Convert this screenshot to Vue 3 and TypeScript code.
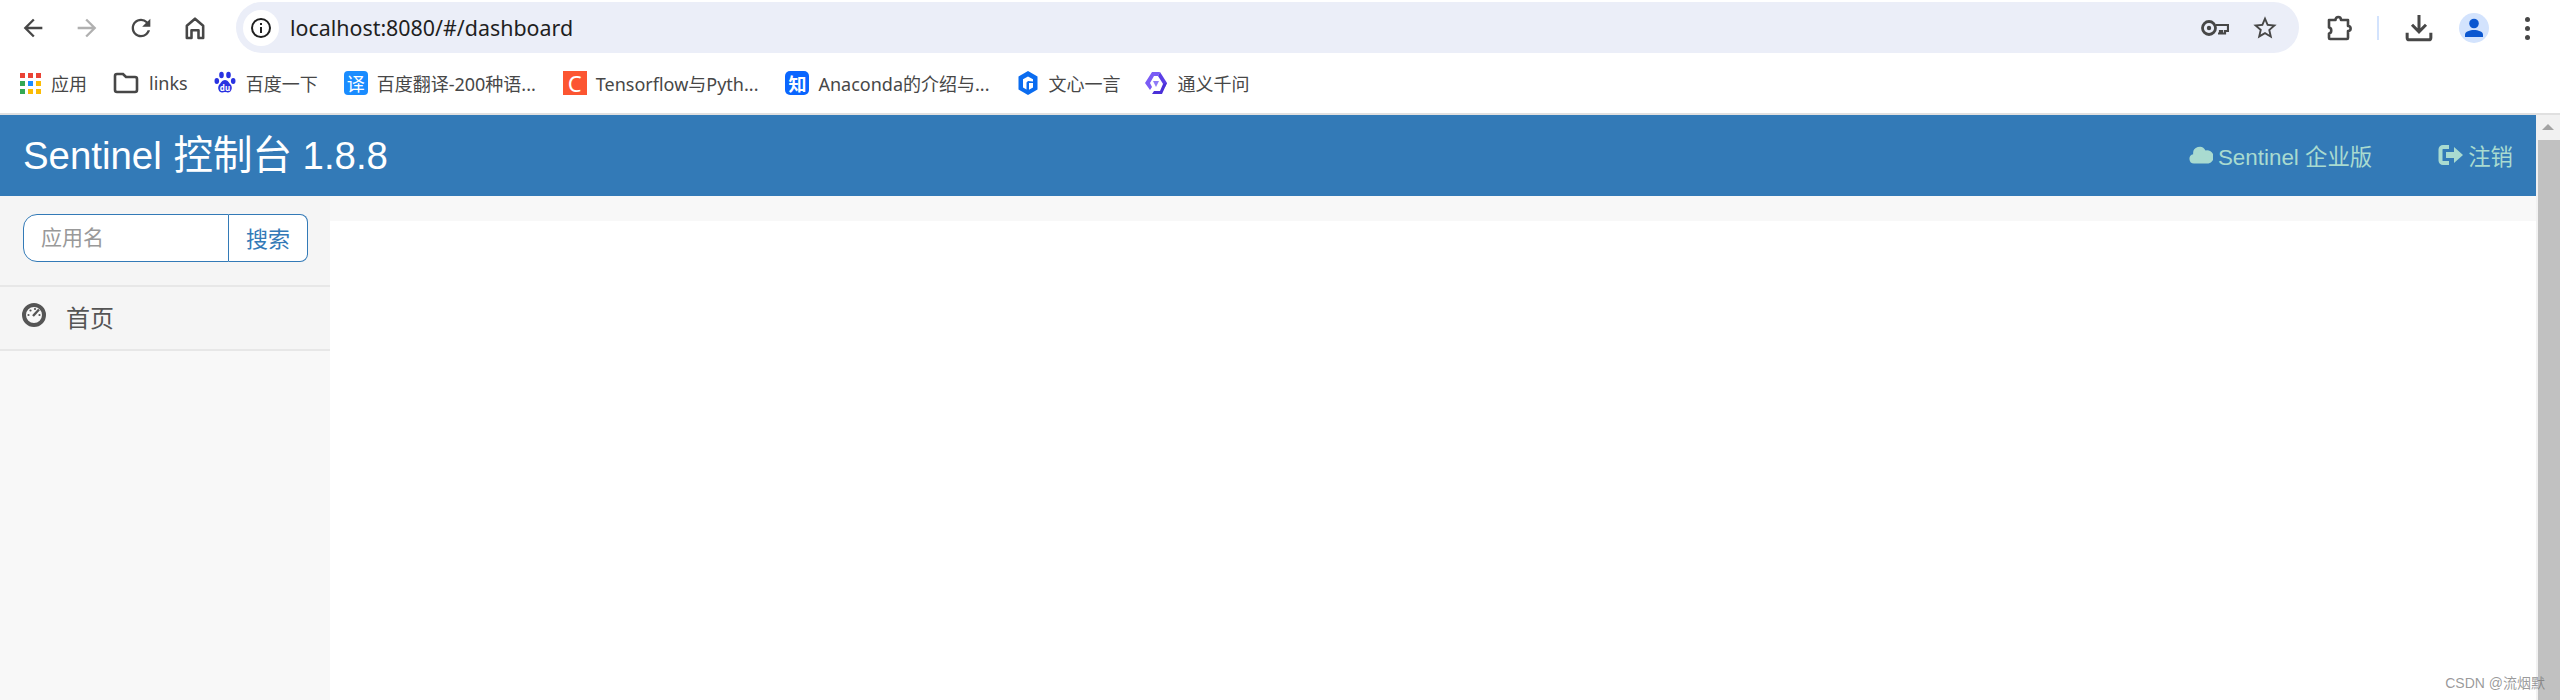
<script setup lang="ts">
const appColors: string[] = [
  "#ea4335", "#ea4335", "#ea4335",
  "#34a853", "#1a8cff", "#fbbc04",
  "#34a853", "#fbbc04", "#fbbc04",
];
</script>

<template>
  <div class="window">
    <header class="toolbar">
      <div class="nav-btns">
        <svg class="ic" viewBox="0 0 24 24"><path d="M20 11H7.83l5.59-5.59L12 4l-8 8 8 8 1.41-1.41L7.83 13H20v-2z" /></svg>
        <svg class="ic off" viewBox="0 0 24 24"><path d="M4 11h12.17l-5.59-5.59L12 4l8 8-8 8-1.41-1.41L16.17 13H4v-2z" /></svg>
        <svg class="ic" viewBox="0 0 24 24"><path d="M17.65 6.35A7.958 7.958 0 0 0 12 4c-4.42 0-7.99 3.58-7.99 8s3.57 8 7.99 8c3.73 0 6.84-2.55 7.73-6h-2.08A5.99 5.99 0 0 1 12 18c-3.31 0-6-2.69-6-6s2.69-6 6-6c1.66 0 3.14.69 4.22 1.78L13 11h7V4l-2.35 2.35z" /></svg>
        <svg class="ic" viewBox="0 0 24 24"><path class="line" d="M5 20.5V10l7-6 7 6v10.5h-4V14H9v6.500z" /></svg>
      </div>
      <div class="omnibox">
        <span class="site-info">
          <svg width="22" height="22" viewBox="0 0 22 22">
            <circle cx="11" cy="11" r="9" fill="none" stroke="#1f1f1f" stroke-width="2" />
            <rect x="10" y="10" width="2" height="6" fill="#1f1f1f" />
            <rect x="10" y="6" width="2" height="2" fill="#1f1f1f" />
          </svg>
        </span>
        <span class="url">localhost:8080/#/dashboard</span>
        <span class="omni-right">
          <svg width="28" height="18" viewBox="0 0 28 18">
            <circle cx="8" cy="9" r="6.500" fill="none" stroke="#474747" stroke-width="2.800" />
            <circle cx="8" cy="9" r="2.200" fill="#474747" />
            <path d="M15 6h12v6h-3v2.500h-3V12h-2v2.500h-2" fill="none" stroke="#474747" stroke-width="2.200" />
          </svg>
          <svg class="ic" viewBox="0 0 24 24"><path d="M22 9.240l-7.190-.62L12 2 9.190 8.630 2 9.240l5.460 4.730L5.820 21 12 17.270 18.180 21l-1.630-7.030L22 9.240zM12 15.400l-3.760 2.270 1-4.280-3.320-2.880 4.380-.38L12 6.100l1.710 4.040 4.380.38-3.320 2.880 1 4.280L12 15.400z" /></svg>
        </span>
      </div>
      <div class="tools">
        <svg class="puzzle" width="26" height="26" viewBox="0 0 26 26">
          <path class="line bold" d="M3 5h6.500c0-4 5.500-4 5.500 0H22v6c3.500 0 3.500 5 0 5v7a1 1 0 0 1-1 1H4a1 1 0 0 1-1-1v-4.500c3-.5 3-5.500 0-6z" />
        </svg>
        <span class="sep"></span>
        <svg width="28" height="28" viewBox="0 0 26 26">
          <path d="M13 1v15M6.500 10l6.500 6.500 6.500-6.500" fill="none" stroke="#474747" stroke-width="2.800" />
          <path d="M2 17.500v4.500a2 2 0 0 0 2 2h18a2 2 0 0 0 2-2v-4.500" fill="none" stroke="#474747" stroke-width="2.800" />
        </svg>
        <span class="avatar">
          <svg width="20" height="20" viewBox="0 0 20 20">
            <circle cx="10" cy="5.500" r="4.800" fill="#0b57d0" />
            <path d="M1 19v-2.500c0-3 5-4.500 9-4.500s9 1.500 9 4.500V19z" fill="#0b57d0" />
          </svg>
        </span>
        <span class="dots"><i></i><i></i><i></i></span>
      </div>
    </header>

    <nav class="bookmarks">
      <a class="mark">
        <span class="apps"><i v-for="(c, n) in appColors" :key="n" :style="{ background: c }"></i></span>
        应用
      </a>
      <a class="mark">
        <svg width="26" height="22" viewBox="0 0 26 22"><path d="M2 4a2 2 0 0 1 2-2h6l3 3h9a2 2 0 0 1 2 2v11a2 2 0 0 1-2 2H4a2 2 0 0 1-2-2z" fill="none" stroke="#474747" stroke-width="2.600" /></svg>
        links
      </a>
      <a class="mark">
        <svg width="22" height="24" viewBox="0 0 22 24">
          <ellipse cx="7.500" cy="4" rx="2.300" ry="3.300" fill="#2932e1" />
          <ellipse cx="14.500" cy="4" rx="2.300" ry="3.300" fill="#2932e1" />
          <ellipse cx="2.800" cy="10" rx="2.300" ry="3" fill="#2932e1" />
          <ellipse cx="19.200" cy="10" rx="2.300" ry="3" fill="#2932e1" />
          <path d="M11 9c-3 0-4 3-6 5-2 3 0 8 3.500 7.500 1-.2 2-.5 2.500-.5s1.500.3 2.500.5C17 22 19 17 17 14c-2-2-3-5-6-5z" fill="#2932e1" />
          <text x="11" y="20" class="du">du</text>
        </svg>
        百度一下
      </a>
      <a class="mark">
        <span class="tile tile-blue">译</span>
        <span class="tight">百度翻译-200种语...</span>
      </a>
      <a class="mark">
        <span class="tile tile-orange">C</span>
        <span class="tight">Tensorflow与Pyth...</span>
      </a>
      <a class="mark">
        <span class="tile tile-zhi">知</span>
        <span class="tight">Anaconda的介绍与...</span>
      </a>
      <a class="mark">
        <svg width="22" height="26" viewBox="0 0 22 26">
          <path d="M11 1l9.500 5.500v13L11 25l-9.500-5.500v-13z" fill="#0a6cf0" />
          <path d="M11 6.500l5 2.800v2.200l-5-.5-1.500 1.500v7L6 17.500V9.300z" fill="#fff" />
          <path d="M12 13h4v4.500l-4 2.300z" fill="#fff" />
        </svg>
        文心一言
      </a>
      <a class="mark last">
        <svg width="24" height="24" viewBox="0 0 24 24">
          <path d="M8 1h8l-2 4h-4l-4 7 2 4-2 3-5-7z" fill="#7a5cf5" />
          <path d="M16 1l7 11-2 4-7-11z" fill="#5b3ee6" />
          <path d="M23 12l-5 11H8l2-3h6l3-7z" fill="#4a30d8" />
          <path d="M9 10h6l-3 6z" fill="#8f7bf7" />
        </svg>
        通义千问
      </a>
    </nav>

    <div class="page">
      <div class="app-col">
        <div class="navbar">
          <span class="brand">Sentinel <span class="brand-cjk">控制台</span> 1.8.8</span>
          <div class="nav-links">
            <a class="nav-link">
              <svg width="24" height="18" viewBox="0 0 24 18"><path d="M5 17.500a4.700 4.700 0 0 1-.8-9.300A6.500 6.500 0 0 1 16.500 4.500 5 5 0 0 1 19.500 17.500z" fill="#a9dbd0" /></svg>
              Sentinel 企业版
            </a>
            <a class="nav-link logout">
              <svg width="26" height="22" viewBox="0 0 26 22">
                <path d="M11 3H5a2.500 2.500 0 0 0-2.500 2.500v11A2.500 2.500 0 0 0 5 19h6" fill="none" stroke="#a9dbd0" stroke-width="4" />
                <path d="M8 8h8V3l9 8-9 8v-5H8z" fill="#a9dbd0" />
              </svg>
              注销
            </a>
          </div>
        </div>
        <div class="body-row">
          <aside class="sidebar">
            <div class="search-wrap">
              <form class="search" @submit.prevent>
                <input class="search-input" type="text" placeholder="应用名" />
                <button class="search-btn" type="button">搜索</button>
              </form>
            </div>
            <a class="menu-item">
              <svg width="24" height="24" viewBox="0 0 24 24">
                <circle cx="12" cy="12" r="10" fill="#f8f8f8" stroke="#555" stroke-width="4" />
                <circle cx="6.500" cy="12" r="1.100" fill="#555" />
                <circle cx="8.500" cy="7.500" r="1.100" fill="#555" />
                <circle cx="13" cy="6" r="1.100" fill="#555" />
                <circle cx="17.500" cy="12" r="1.100" fill="#555" />
                <path d="M17 6.500L11 13" stroke="#555" stroke-width="2.400" />
              </svg>
              <span>首页</span>
            </a>
          </aside>
          <main class="content"></main>
        </div>
      </div>
      <div class="scrollbar">
        <span class="arrow"></span>
        <span class="thumb"></span>
      </div>
      <span class="watermark">CSDN @流烟默</span>
    </div>
  </div>
</template>

<style>
html,
body {
  margin: 0;
  overflow: hidden;
  background: #fff;
}
</style>

<style scoped>
.window {
  position: relative;
  width: 2560px;
  height: 700px;
  display: flex;
  flex-direction: column;
  overflow: hidden;
  font-family: "Noto Sans", "Noto Sans CJK SC", sans-serif;
  color: #474747;
}

.toolbar {
  height: 56px;
  padding-top: 2px;
  box-sizing: border-box;
  display: flex;
  align-items: flex-start;
}
.nav-btns {
  width: 236px;
  height: 52px;
  padding-left: 19px;
  box-sizing: border-box;
  display: flex;
  align-items: center;
  gap: 26px;
}
.ic {
  width: 28px;
  height: 28px;
  fill: #474747;
}
.ic.off {
  fill: #b0b0b0;
}
.line {
  fill: none;
  stroke: #474747;
  stroke-width: 2.200;
  stroke-linejoin: round;
}
.line.bold {
  stroke-width: 2.600;
}
.omnibox {
  width: 2063px;
  height: 51px;
  border-radius: 26px;
  background: #ebeef8;
  display: flex;
  align-items: center;
  padding-left: 7px;
  box-sizing: border-box;
}
.site-info {
  width: 36px;
  height: 36px;
  border-radius: 50%;
  background: #fff;
  display: flex;
  align-items: center;
  justify-content: center;
}
.url {
  margin-left: 11px;
  font-size: 21.400px;
  color: #1f1f1f;
}
.omni-right {
  margin-left: auto;
  margin-right: 20px;
  display: flex;
  align-items: center;
  gap: 22px;
}
.tools {
  flex: 1;
  height: 52px;
  display: flex;
  align-items: center;
  padding-left: 27px;
}
.puzzle {
  margin-right: 25px;
}
.sep {
  width: 2px;
  height: 24px;
  background: #d3e3fd;
  margin-right: 26px;
}
.avatar {
  width: 30px;
  height: 30px;
  margin-left: 26px;
  border-radius: 50%;
  background: #d3e3fd;
  display: flex;
  align-items: center;
  justify-content: center;
}
.dots {
  margin-left: 36px;
  display: flex;
  flex-direction: column;
  gap: 4px;
}
.dots i {
  width: 5px;
  height: 5px;
  border-radius: 50%;
  background: #474747;
}

.bookmarks {
  height: 59px;
  box-sizing: border-box;
  padding: 0 0 3px 20px;
  display: flex;
  align-items: center;
  gap: 26px;
  border-bottom: 2px solid #e0e0e0;
  font-size: 18px;
}
.mark {
  display: flex;
  align-items: center;
  gap: 10px;
  white-space: nowrap;
}
.mark.last {
  margin-left: -3px;
}
.apps {
  display: grid;
  grid-template-columns: repeat(3, 5px);
  gap: 3px;
}
.apps i {
  height: 5px;
}
.du {
  font-size: 8px;
  font-weight: 700;
  fill: #fff;
  text-anchor: middle;
}
.tile {
  width: 24px;
  height: 24px;
  display: flex;
  align-items: center;
  justify-content: center;
  color: #fff;
  font-size: 18px;
}
.tight {
  margin: 0 1px 0 -1px;
}
.tile-blue {
  background: #1a8cff;
  border-radius: 4px;
}
.tile-orange {
  background: #fc5531;
  font-size: 22px;
}
.tile-zhi {
  background: #0a66ff;
  border-radius: 5px;
  font-weight: 700;
}

.page {
  flex: 1;
  min-height: 0;
  display: flex;
  position: relative;
}
.app-col {
  flex: 1;
  display: flex;
  flex-direction: column;
  font-family: "Liberation Sans", "Noto Sans CJK SC", sans-serif;
}
.navbar {
  height: 81px;
  background: #337ab7;
  display: flex;
  align-items: center;
  justify-content: space-between;
  padding: 0 23px;
  box-sizing: border-box;
}
.brand {
  font-size: 38.400px;
  color: #fff;
  margin-top: -9px;
}
.brand-cjk {
  font-size: 39.500px;
  margin-left: 1px;
}
.nav-links {
  display: flex;
  align-items: center;
  gap: 66px;
  margin-top: -2px;
  font-size: 22.400px;
  color: #a9dbd0;
}
.nav-link {
  display: flex;
  align-items: center;
  gap: 5px;
}
.logout {
  gap: 4px;
}
.body-row {
  flex: 1;
  display: flex;
  background: #f8f8f8;
}
.sidebar {
  width: 330px;
  display: flex;
  flex-direction: column;
}
.search-wrap {
  background: #f5f5f5;
  padding: 18px 22px 23px 23px;
}
.search {
  display: flex;
  height: 48px;
}
.search-input {
  width: 206px;
  box-sizing: border-box;
  border: 1px solid #337ab7;
  border-radius: 14px 0 0 14px;
  padding: 0 17px;
  font: 21px "Liberation Sans", "Noto Sans CJK SC", sans-serif;
  outline: none;
}
.search-input::placeholder {
  color: #999;
}
.search-btn {
  flex: 1;
  border: 1px solid #337ab7;
  border-left: 0;
  border-radius: 0 8px 8px 0;
  background: #fff;
  color: #337ab7;
  padding: 0 0 2px;
  font: 22px "Liberation Sans", "Noto Sans CJK SC", sans-serif;
}
.menu-item {
  height: 66px;
  box-sizing: border-box;
  display: flex;
  align-items: center;
  padding: 0 22px 4px;
  gap: 20px;
  font-size: 24px;
  color: #555;
  background: #f5f5f5;
  border-top: 2px solid #e7e7e7;
  border-bottom: 2px solid #e7e7e7;
}
.menu-item svg {
  margin-top: -2px;
}
.content {
  flex: 1;
  margin-top: 25px;
  background: #fff;
}
.scrollbar {
  width: 24px;
  background: #f1f1f1;
  display: flex;
  flex-direction: column;
  align-items: center;
}
.arrow {
  margin-top: 9px;
  border-left: 6px solid transparent;
  border-right: 6px solid transparent;
  border-bottom: 6px solid #a3a3a3;
}
.thumb {
  margin: 10px 0 0 2px;
  width: 22px;
  flex: 1;
  background: #c1c1c1;
}
.watermark {
  position: absolute;
  right: 15px;
  bottom: 8px;
  font: 14px "Liberation Sans", "Noto Sans CJK SC", sans-serif;
  color: rgba(110, 110, 110, 0.7);
}
</style>
